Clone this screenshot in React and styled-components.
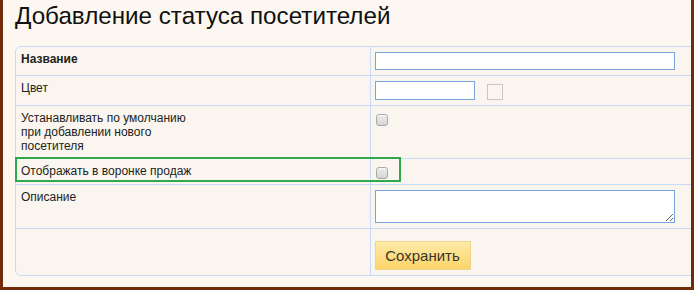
import React from 'react';
import styled, { createGlobalStyle } from 'styled-components';

const Global = createGlobalStyle`
  html, body {
    margin: 0;
    padding: 0;
    background: #fcf8f1;
  }
  body {
    font-family: "Liberation Sans", Arial, sans-serif;
  }
`;

const Frame = styled.div`
  box-sizing: border-box;
  width: 694px;
  height: 290px;
  overflow: hidden;
  background: #fcf8f1;
  border: 3px solid #722b0b;
  border-top: none;
  padding: 0 0 0 12px;
`;

const Title = styled.h1`
  margin: 2px 0 16px 0;
  font-size: 24.2px;
  font-weight: normal;
  line-height: 28px;
  color: #111;
  white-space: nowrap;
`;

const TableWrapper = styled.div`
  position: relative;
  width: 720px;
  border: 1px solid #c7dbf8;
  border-radius: 6px;
  background: #faf6ef;
`;

const Table = styled.table`
  box-sizing: border-box;
  border-collapse: collapse;
  table-layout: fixed;
  width: 100%;
`;

const TableRow = styled.tr`
  border-bottom: ${p => (p.$last ? 'none' : '1px solid #c7dbf8')};
`;

const LabelCell = styled.td`
  box-sizing: border-box;
  width: 354px;
  padding: 5px 4px 5px 5px;
  border-right: 1px solid #c7dbf8;
  vertical-align: top;
  font-size: 12px;
  line-height: 14px;
  color: #222;
  font-weight: ${p => (p.$bold ? 'bold' : 'normal')};
`;

const FieldCell = styled.td`
  padding: 5px 4px;
  vertical-align: top;
  font-size: 12px;
  line-height: 14px;
`;

const FieldLine = styled.div`
  display: flex;
  align-items: center;
  gap: 12px;
`;

const TextInput = styled.input`
  box-sizing: border-box;
  display: block;
  width: ${p => p.$width}px;
  height: ${p => p.$height}px;
  margin: 0;
  padding: 1px 3px;
  border: 1px solid #78a3dd;
  background: #fff;
  font: 12px "Liberation Sans", Arial, sans-serif;
  outline: none;
`;

const TextArea = styled.textarea`
  box-sizing: border-box;
  display: block;
  width: 300px;
  height: 33px;
  margin: 0;
  padding: 2px 3px;
  border: 1px solid #78a3dd;
  background: #fff;
  font: 12px "Liberation Sans", Arial, sans-serif;
  outline: none;
`;

const Swatch = styled.span`
  box-sizing: border-box;
  display: block;
  width: 16px;
  height: 16px;
  margin-top: 2px;
  border: 1px solid #c9c7c3;
`;

const Check = styled.input`
  appearance: none;
  box-sizing: border-box;
  display: block;
  width: 12px;
  height: 12px;
  margin: 3px 0 0 1px;
  border: 1px solid #a9a9a9;
  border-radius: 3px;
  background: linear-gradient(#ececec, #d6d6d6);
  box-shadow: inset 0 1px 0 #f8f8f8;
`;

const SaveButton = styled.button`
  box-sizing: border-box;
  display: block;
  width: 96px;
  height: 29px;
  margin: 7px 0 0 0;
  padding: 0 0 1px 0;
  border: 1px solid #f0d48c;
  background: linear-gradient(#feeaa8, #fcd46a);
  font: 15px "Liberation Sans", Arial, sans-serif;
  color: #3a3426;
  cursor: pointer;
`;

const Highlight = styled.div`
  position: absolute;
  left: -1px;
  top: 110px;
  width: 386px;
  height: 25px;
  box-sizing: border-box;
  border: 2px solid #2eaa4c;
  pointer-events: none;
`;

export default () =>
  <>
    <Global />
    <Frame>
      <Title>Добавление статуса посетителей</Title>
      <TableWrapper>
        <Table>
          <tbody>
            <TableRow>
              <LabelCell $bold>Название</LabelCell>
              <FieldCell>
                <TextInput type="text" $width={300} $height={18} />
              </FieldCell>
            </TableRow>
            <TableRow>
              <LabelCell>Цвет</LabelCell>
              <FieldCell>
                <FieldLine>
                  <TextInput type="text" $width={100} $height={19} />
                  <Swatch />
                </FieldLine>
              </FieldCell>
            </TableRow>
            <TableRow>
              <LabelCell>
                Устанавливать по умолчанию<br />
                при добавлении нового<br />
                посетителя
              </LabelCell>
              <FieldCell>
                <Check type="checkbox" />
              </FieldCell>
            </TableRow>
            <TableRow>
              <LabelCell>Отображать в воронке продаж</LabelCell>
              <FieldCell>
                <Check type="checkbox" />
              </FieldCell>
            </TableRow>
            <TableRow>
              <LabelCell>Описание</LabelCell>
              <FieldCell>
                <TextArea />
              </FieldCell>
            </TableRow>
            <TableRow $last>
              <LabelCell />
              <FieldCell>
                <SaveButton type="button">Сохранить</SaveButton>
              </FieldCell>
            </TableRow>
          </tbody>
        </Table>
        <Highlight />
      </TableWrapper>
    </Frame>
  </>;
